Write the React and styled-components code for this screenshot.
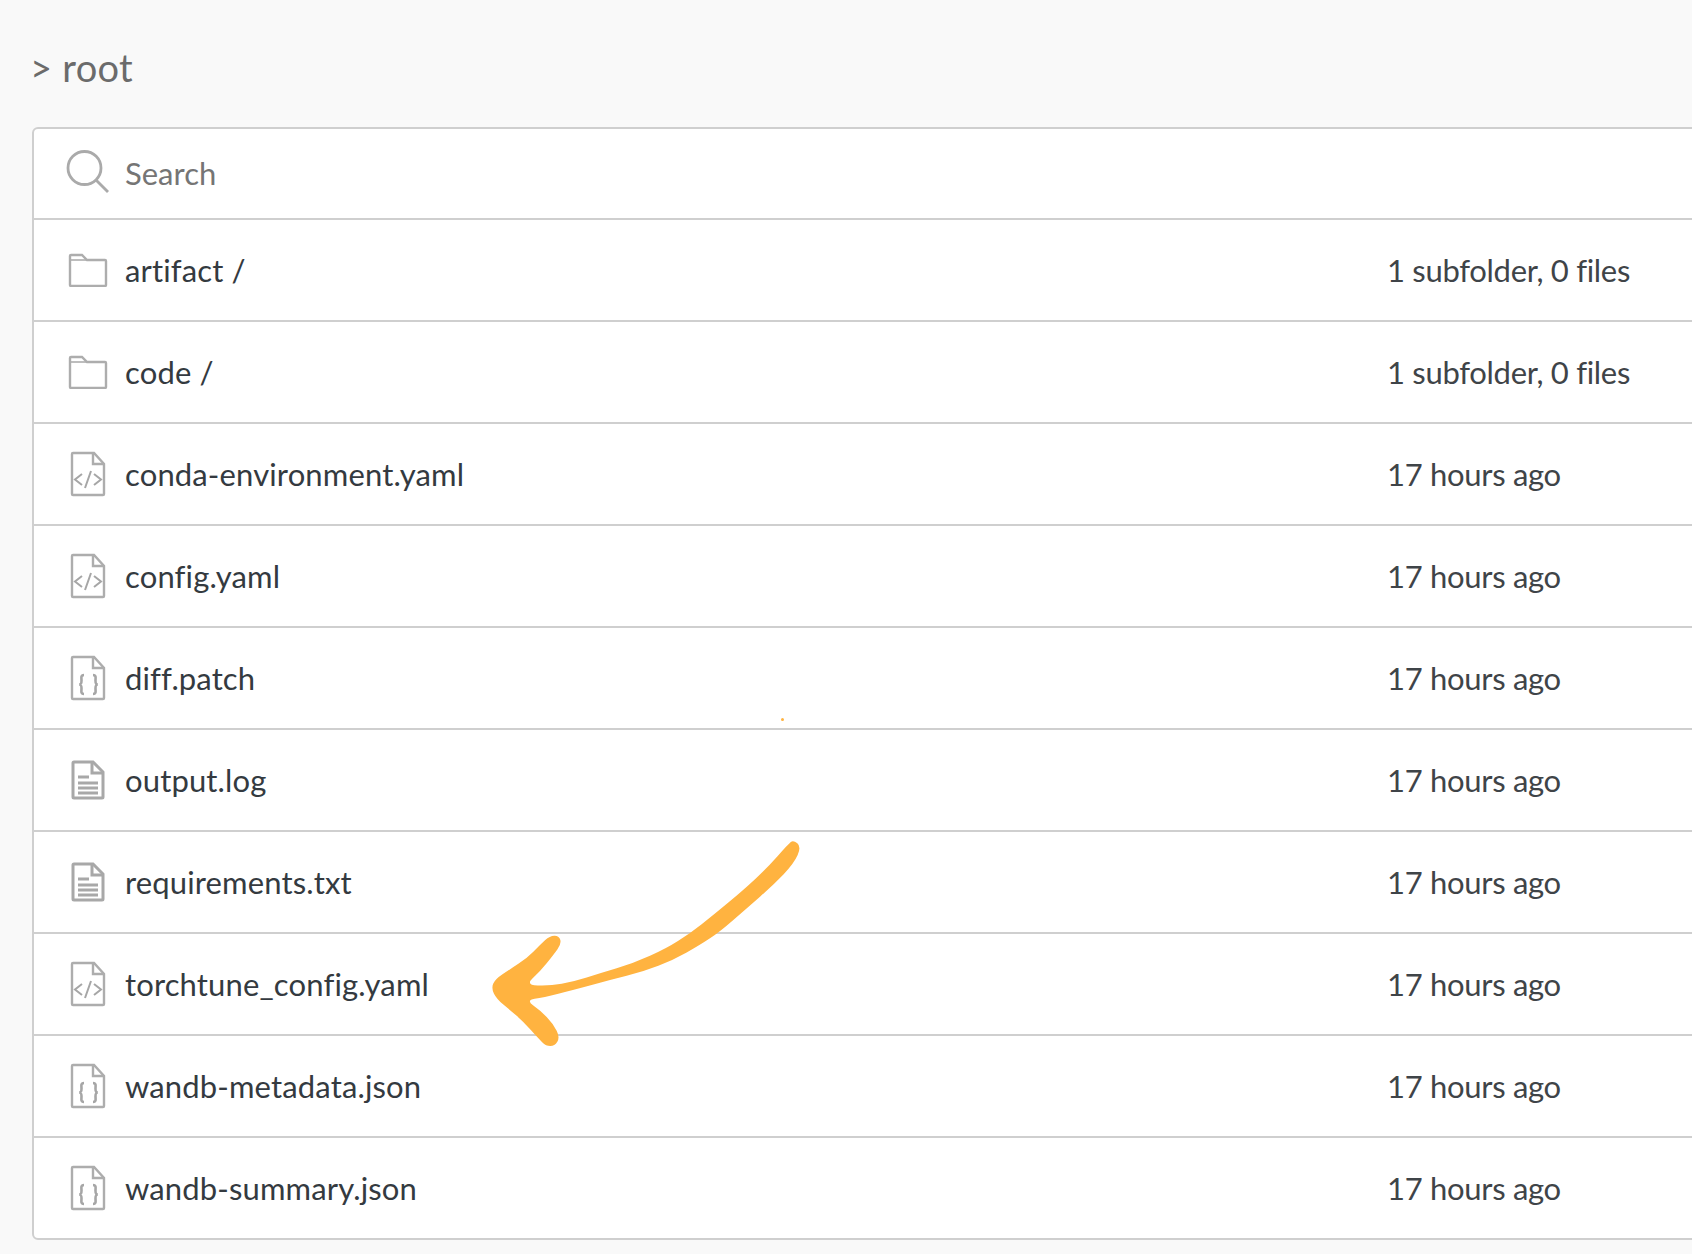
import styled, { createGlobalStyle } from "styled-components";

const GlobalStyle = createGlobalStyle`
  html, body {
    margin: 0;
    padding: 0;
    background: #f9f9f9;
  }
  body {
    font-family: "Lato", "Noto Sans", "Liberation Sans", sans-serif;
    font-variant-ligatures: none;
    overflow: hidden;
  }
`;

const Page = styled.div`
  position: relative;
  width: 1692px;
  height: 1254px;
  padding: 39px 0 0 32px;
  box-sizing: border-box;
  overflow: hidden;
`;

const Crumb = styled.h1`
  margin: 0 0 32px -2px;
  font-size: 38px;
  font-weight: 400;
  line-height: 56px;
  letter-spacing: 0.3px;
  color: #6b6b6b;
`;

const Card = styled.div`
  width: 1800px;
  background: #fff;
  border: 2px solid #cfcfcf;
  border-radius: 6px;
  box-sizing: border-box;
`;

const SearchRow = styled.div`
  display: flex;
  align-items: center;
  height: 89px;
  padding-left: 31px;
  border-bottom: 2px solid #cfcfcf;
`;

const SearchGlyph = styled.svg`
  margin-bottom: 6px;
`;

const SearchText = styled.span`
  margin: 0 0 2px 16px;
  font-size: 31px;
  color: #757575;
`;

const Row = styled.div`
  display: flex;
  align-items: center;
  height: 100px;
  padding-left: 33px;
  border-bottom: 2px solid #cfcfcf;
  &:last-child {
    border-bottom: none;
  }
`;

const IconCell = styled.div`
  display: flex;
  justify-content: center;
  width: 42px;
  flex: none;
`;

const Name = styled.div`
  width: 1262px;
  flex: none;
  margin-left: 16px;
  font-size: 31px;
  letter-spacing: 0.14px;
  color: #343a40;
`;

const Meta = styled.div`
  font-size: 31px;
  letter-spacing: -0.3px;
  color: #3f4448;
`;

const Arrow = styled.svg`
  position: absolute;
  left: 460px;
  top: 820px;
  pointer-events: none;
`;

const Speck = styled.span`
  position: absolute;
  left: 781px;
  top: 718px;
  width: 3px;
  height: 3px;
  border-radius: 50%;
  background: #ffb340;
`;

function SearchIcon() {
  return (
    <SearchGlyph width="44" height="44" viewBox="0 0 44 44" fill="none" stroke="#aaa" strokeWidth="2.800">
      <circle cx="19.500" cy="19" r="16.500" />
      <path d="M31 31l12 12" />
    </SearchGlyph>
  );
}

function FolderIcon() {
  return (
    <svg width="40" height="34" viewBox="0 0 40 34" fill="none" stroke="#adadad" strokeWidth="2.400">
      <path d="M2 31V3a1 1 0 0 1 1-1h11l5 5h18a1 1 0 0 1 1 1v24a1 1 0 0 1-1 1H3a1 1 0 0 1-1-1z" />
      <path d="M2 7h17" strokeWidth="1.600" />
    </svg>
  );
}

function CodeFileIcon({ kind }) {
  return (
    <svg width="36" height="46" viewBox="0 0 36 46" fill="none" stroke="#adadad" strokeWidth="2.400">
      <path d="M2 3a1 1 0 0 1 1-1h21l10 11v30a1 1 0 0 1-1 1H3a1 1 0 0 1-1-1z" />
      <path d="M23 2v11h11" />
      {kind === "code" && (
        <path d="M12 23l-7 5.500 7 5.500M24 23l7 5.500-7 5.500M21 20l-6 17" strokeWidth="2" stroke="#a6a6a6" />
      )}
      {kind === "json" && (
        <path
          d="M14 20c-3.500 0-2.500 3-2.500 5.500s0 3.500-2 4c2 .5 2 1.500 2 4s-1 5.500 2.500 5.500M23 20c3.500 0 2.500 3 2.500 5.500s0 3.500 2 4c-2 .5-2 1.500-2 4s1 5.500-2.500 5.500"
          strokeWidth="2.600"
          stroke="#a6a6a6"
        />
      )}
    </svg>
  );
}

function TextFileIcon() {
  return (
    <svg width="34" height="40" viewBox="0 0 34 40" fill="none" stroke="#a8a8a8" strokeWidth="3">
      <path d="M2 3a1 1 0 0 1 1-1h19l10 10v25a1 1 0 0 1-1 1H3a1 1 0 0 1-1-1z" />
      <path d="M21 2v11h11" />
      <path d="M7 17h11M7 23h20M7 28h20M7 33h20" />
    </svg>
  );
}

const arrowPoints = [
  [1000, 60], [1024, 80], [1002, 130], [940, 195], [860, 265], [780, 335], [720, 375],
  [640, 420], [550, 455], [450, 480], [340, 510], [250, 532], [198, 541], [240, 570],
  [280, 612], [300, 652], [284, 678], [258, 678], [235, 655], [190, 605], [150, 570],
  [110, 537], [94, 505], [105, 478], [150, 448], [200, 415], [240, 375], [270, 347],
  [298, 348], [304, 372], [280, 405], [240, 455], [196, 495], [270, 498], [340, 485],
  [420, 460], [520, 430], [620, 385], [690, 340], [760, 285], [850, 210], [920, 145],
  [985, 72],
];

// closed curve through the midpoints, keeps the brush ends round
function smoothPath(points) {
  const mid = (a, b) => [(a[0] + b[0]) / 2, (a[1] + b[1]) / 2];
  const start = mid(points[points.length - 1], points[0]);
  let d = `M${start[0]} ${start[1]}`;
  points.forEach((p, i) => {
    const m = mid(p, points[(i + 1) % points.length]);
    d += `Q${p[0]} ${p[1]} ${m[0]} ${m[1]}`;
  });
  return d + "Z";
}

const rows = [
  { name: "artifact /", icon: "folder", meta: "1 subfolder, 0 files" },
  { name: "code /", icon: "folder", meta: "1 subfolder, 0 files" },
  { name: "conda-environment.yaml", icon: "code", meta: "17 hours ago" },
  { name: "config.yaml", icon: "code", meta: "17 hours ago" },
  { name: "diff.patch", icon: "json", meta: "17 hours ago" },
  { name: "output.log", icon: "text", meta: "17 hours ago" },
  { name: "requirements.txt", icon: "text", meta: "17 hours ago" },
  { name: "torchtune_config.yaml", icon: "code", meta: "17 hours ago" },
  { name: "wandb-metadata.json", icon: "json", meta: "17 hours ago" },
  { name: "wandb-summary.json", icon: "json", meta: "17 hours ago" },
];

function RowIcon({ icon }) {
  if (icon === "folder") return <FolderIcon />;
  if (icon === "text") return <TextFileIcon />;
  return <CodeFileIcon kind={icon} />;
}

export default function App() {
  return (
    <>
      <GlobalStyle />
      <Page>
        <Crumb>&gt; root</Crumb>
        <Card>
          <SearchRow>
            <SearchIcon />
            <SearchText>Search</SearchText>
          </SearchRow>
          {rows.map((row) => (
            <Row key={row.name}>
              <IconCell>
                <RowIcon icon={row.icon} />
              </IconCell>
              <Name>{row.name}</Name>
              <Meta>{row.meta}</Meta>
            </Row>
          ))}
        </Card>
        <Speck />
        <Arrow width="360" height="240" viewBox="0 0 1080 720">
          <path d={smoothPath(arrowPoints)} fill="#ffb340" />
        </Arrow>
      </Page>
    </>
  );
}
